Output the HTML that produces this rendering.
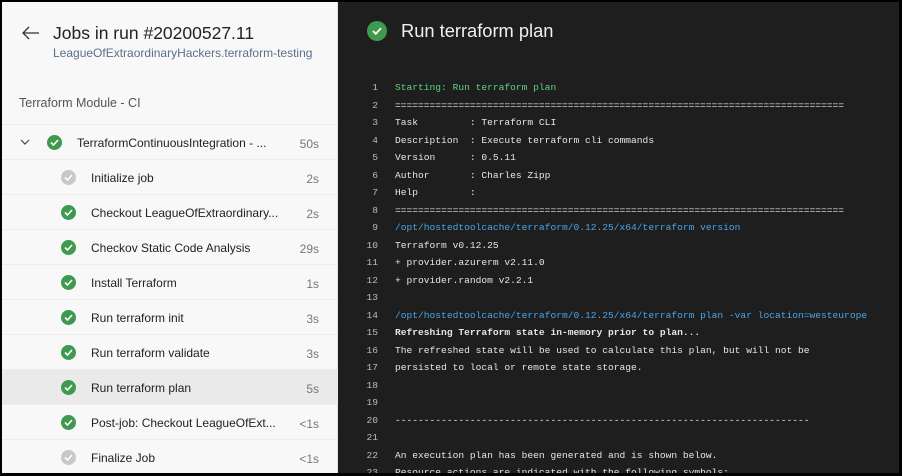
<!DOCTYPE html>
<html><head><meta charset="utf-8"><style>
*{margin:0;padding:0;box-sizing:border-box}
body{width:902px;height:476px;background:#000;overflow:hidden;font-family:"Liberation Sans",sans-serif}
#wrap{position:absolute;left:2px;top:2px;width:897px;height:471px;overflow:hidden}
#left{position:absolute;left:0;top:0;width:336px;height:471px;background:#f8f8f8;border-right:1px solid #e0e0e0}
#right{position:absolute;left:336px;top:0;width:561px;height:471px;background:#1e1e1e}
.back{position:absolute;left:20px;top:24px}
.t1{position:absolute;left:51px;top:21px;font-size:17.5px;color:#222}
.t2{position:absolute;left:51px;top:44px;font-size:12px;color:#5a6f8a}
.sec{position:absolute;left:17px;top:94px;font-size:12.5px;color:#555}
.row{position:absolute;left:0;width:336px;height:35px;border-top:1px solid #ececec;font-size:12px;color:#222}
.row.sel{background:#eaeaea}
.row .ic{position:absolute;top:10px;width:15px;height:15px;border-radius:50%;background:#3f9a50}
.row .ic.g{background:#c8c8c8}
.row .ic svg{position:absolute;left:3px;top:4px}
.row .tx{position:absolute;top:11px}
.row .d{position:absolute;right:19px;top:12px;color:#777;font-size:12px}
.hic{position:absolute;left:29px;top:19px;width:20px;height:20px;border-radius:50%;background:#3f9a50}
.hic svg{position:absolute;left:5px;top:6px}
.ht{position:absolute;left:63px;top:18px;font-size:18.3px;color:#f0f0f0}
.log{position:absolute;left:0;top:80px;font-family:"Liberation Mono",monospace;font-size:9.6px;color:#e6e6e6}
.ln{position:absolute;left:0;height:17.5px;white-space:pre}
.ln .n{position:absolute;width:40px;text-align:right;color:#bbb}
.ln .c{position:absolute;left:57px}
.gr{color:#5fd37a}.bl{color:#4aa6e8}.b{font-weight:bold}
</style></head><body><div id="wrap">
<div id="left">
<svg class="back" width="18" height="14" viewBox="0 0 18 14"><path d="M7 1L1 7l6 6M1 7h16" stroke="#333" stroke-width="1.3" fill="none"/></svg>
<div class="t1">Jobs in run #20200527.11</div>
<div class="t2">LeagueOfExtraordinaryHackers.terraform-testing</div>
<div class="sec">Terraform Module - CI</div>

<div class="row" style="top:122px"><svg style="position:absolute;left:18px;top:14px" width="10" height="7"><path d="M1 1l4 4 4-4" stroke="#444" stroke-width="1.2" fill="none"/></svg><div class="ic" style="left:45px"><svg width="9" height="7"><path d="M1 3.5l2.5 2.5 4.5-5" stroke="#fff" stroke-width="1.6" fill="none"/></svg></div><div class="tx" style="left:75px">TerraformContinuousIntegration - ...</div><div class="d">50s</div></div>
<div class="row" style="top:157px"><div class="ic g" style="left:59px"><svg width="9" height="7"><path d="M1 3.5l2.5 2.5 4.5-5" stroke="#fff" stroke-width="1.6" fill="none"/></svg></div><div class="tx" style="left:89px">Initialize job</div><div class="d">2s</div></div>
<div class="row" style="top:192px"><div class="ic" style="left:59px"><svg width="9" height="7"><path d="M1 3.5l2.5 2.5 4.5-5" stroke="#fff" stroke-width="1.6" fill="none"/></svg></div><div class="tx" style="left:89px">Checkout LeagueOfExtraordinary...</div><div class="d">2s</div></div>
<div class="row" style="top:227px"><div class="ic" style="left:59px"><svg width="9" height="7"><path d="M1 3.5l2.5 2.5 4.5-5" stroke="#fff" stroke-width="1.6" fill="none"/></svg></div><div class="tx" style="left:89px">Checkov Static Code Analysis</div><div class="d">29s</div></div>
<div class="row" style="top:262px"><div class="ic" style="left:59px"><svg width="9" height="7"><path d="M1 3.5l2.5 2.5 4.5-5" stroke="#fff" stroke-width="1.6" fill="none"/></svg></div><div class="tx" style="left:89px">Install Terraform</div><div class="d">1s</div></div>
<div class="row" style="top:297px"><div class="ic" style="left:59px"><svg width="9" height="7"><path d="M1 3.5l2.5 2.5 4.5-5" stroke="#fff" stroke-width="1.6" fill="none"/></svg></div><div class="tx" style="left:89px">Run terraform init</div><div class="d">3s</div></div>
<div class="row" style="top:332px"><div class="ic" style="left:59px"><svg width="9" height="7"><path d="M1 3.5l2.5 2.5 4.5-5" stroke="#fff" stroke-width="1.6" fill="none"/></svg></div><div class="tx" style="left:89px">Run terraform validate</div><div class="d">3s</div></div>
<div class="row sel" style="top:367px"><div class="ic" style="left:59px"><svg width="9" height="7"><path d="M1 3.5l2.5 2.5 4.5-5" stroke="#fff" stroke-width="1.6" fill="none"/></svg></div><div class="tx" style="left:89px">Run terraform plan</div><div class="d">5s</div></div>
<div class="row" style="top:402px"><div class="ic" style="left:59px"><svg width="9" height="7"><path d="M1 3.5l2.5 2.5 4.5-5" stroke="#fff" stroke-width="1.6" fill="none"/></svg></div><div class="tx" style="left:89px">Post-job: Checkout LeagueOfExt...</div><div class="d">&lt;1s</div></div>
<div class="row" style="top:437px"><div class="ic g" style="left:59px"><svg width="9" height="7"><path d="M1 3.5l2.5 2.5 4.5-5" stroke="#fff" stroke-width="1.6" fill="none"/></svg></div><div class="tx" style="left:89px">Finalize Job</div><div class="d">&lt;1s</div></div>
</div>
<div id="right">
<div class="hic"><svg width="10" height="8"><path d="M1 4l2.8 2.8L9 1.2" stroke="#fff" stroke-width="1.8" fill="none"/></svg></div>
<div class="ht">Run terraform plan</div>
<div class="log">
<div class="ln" style="top:0"><span class="n">1</span><span class="c gr">Starting: Run terraform plan</span></div>
<div class="ln" style="top:17.5px"><span class="n">2</span><span class="c">==============================================================================</span></div>
<div class="ln" style="top:35px"><span class="n">3</span><span class="c">Task         : Terraform CLI</span></div>
<div class="ln" style="top:52.5px"><span class="n">4</span><span class="c">Description  : Execute terraform cli commands</span></div>
<div class="ln" style="top:70px"><span class="n">5</span><span class="c">Version      : 0.5.11</span></div>
<div class="ln" style="top:87.5px"><span class="n">6</span><span class="c">Author       : Charles Zipp</span></div>
<div class="ln" style="top:105px"><span class="n">7</span><span class="c">Help         :</span></div>
<div class="ln" style="top:122.5px"><span class="n">8</span><span class="c">==============================================================================</span></div>
<div class="ln" style="top:140px"><span class="n">9</span><span class="c bl">/opt/hostedtoolcache/terraform/0.12.25/x64/terraform version</span></div>
<div class="ln" style="top:157.5px"><span class="n">10</span><span class="c">Terraform v0.12.25</span></div>
<div class="ln" style="top:175px"><span class="n">11</span><span class="c">+ provider.azurerm v2.11.0</span></div>
<div class="ln" style="top:192.5px"><span class="n">12</span><span class="c">+ provider.random v2.2.1</span></div>
<div class="ln" style="top:210px"><span class="n">13</span><span class="c"></span></div>
<div class="ln" style="top:227.5px"><span class="n">14</span><span class="c bl">/opt/hostedtoolcache/terraform/0.12.25/x64/terraform plan -var location=westeurope</span></div>
<div class="ln" style="top:245px"><span class="n">15</span><span class="c b">Refreshing Terraform state in-memory prior to plan...</span></div>
<div class="ln" style="top:262.5px"><span class="n">16</span><span class="c">The refreshed state will be used to calculate this plan, but will not be</span></div>
<div class="ln" style="top:280px"><span class="n">17</span><span class="c">persisted to local or remote state storage.</span></div>
<div class="ln" style="top:297.5px"><span class="n">18</span></div>
<div class="ln" style="top:315px"><span class="n">19</span></div>
<div class="ln" style="top:332.5px"><span class="n">20</span><span class="c">------------------------------------------------------------------------</span></div>
<div class="ln" style="top:350px"><span class="n">21</span></div>
<div class="ln" style="top:367.5px"><span class="n">22</span><span class="c">An execution plan has been generated and is shown below.</span></div>
<div class="ln" style="top:385px"><span class="n">23</span><span class="c">Resource actions are indicated with the following symbols:</span></div>
</div>
</div>
</div></body></html>
